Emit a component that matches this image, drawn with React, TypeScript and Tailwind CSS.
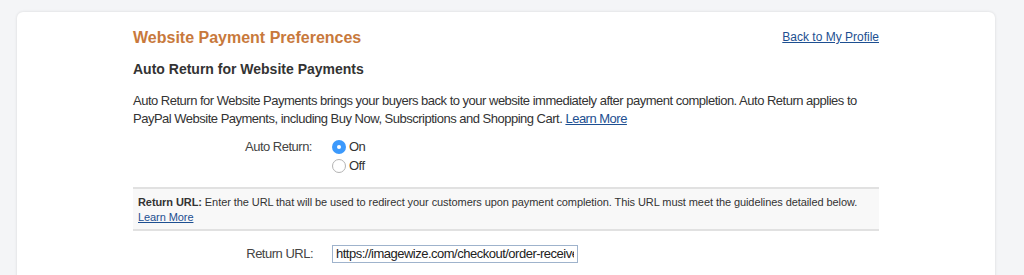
import React from 'react';

const FONT = { fontFamily: '"Liberation Sans", Arial, Helvetica, sans-serif' };

export default function App() {
  return (
    <div className="h-[275px] w-full overflow-hidden bg-[#f4f5f7] pl-[17px] pr-[29px] pt-[12px]" style={FONT}>
      <div className="h-[300px] rounded-t-[6px] bg-white shadow-[0_0_3px_rgba(0,0,0,0.12)]">
        <div className="ml-[116px] w-[746px] pt-[16px] text-[#333]">
          {/* Header */}
          <div className="flex items-start justify-between">
            <h1 className="text-[16px] font-bold leading-[20px] text-[#c8793c]">Website Payment Preferences</h1>
            <a href="#" className="mt-[1px] text-[12px] leading-[16px] text-[#1d4f91] underline">
              Back to My Profile
            </a>
          </div>

          <h2 className="mt-[12px] text-[14px] font-bold leading-[18px] text-[#333]">
            Auto Return for Website Payments
          </h2>

          <p className="mt-[14px] text-[13px] leading-[18px] tracking-[-0.5px] text-[#333]">
            Auto Return for Website Payments brings your buyers back to your website immediately after payment
            completion. Auto Return applies to PayPal Website Payments, including Buy Now, Subscriptions and Shopping
            Cart.{' '}
            <a href="#" className="text-[#1d4f91] underline">
              Learn More
            </a>
          </p>

          {/* Auto Return radios */}
          <div className="mt-[9px] flex text-[13px] leading-[19px] tracking-[-0.5px]">
            <div className="w-[180px] pr-[1px] text-right text-[#444]">Auto Return:</div>
            <div className="ml-[19px] flex flex-col">
              <label className="flex items-center gap-[3px]">
                <span className="flex h-[14px] w-[14px] items-center justify-center rounded-full bg-[#3b99fc]">
                  <span className="h-[4px] w-[4px] rounded-full bg-white" />
                </span>
                <span>On</span>
              </label>
              <label className="flex items-center gap-[3px]">
                <span className="h-[14px] w-[14px] rounded-full border border-[#b3b3b3] bg-white" />
                <span>Off</span>
              </label>
            </div>
          </div>

          {/* Return URL info box */}
          <div className="mt-[12px] border-y-2 border-[#e1e1e1] bg-[#f8f8f8] px-[5px] pb-[4px] pt-[6px] text-[11px] leading-[15px] tracking-[-0.08px] text-[#333]">
            <span className="font-bold">Return URL:</span> Enter the URL that will be used to redirect your customers
            upon payment completion. This URL must meet the guidelines detailed below.
            <br />
            <a href="#" className="text-[#1d4f91] underline">
              Learn More
            </a>
          </div>

          {/* Return URL input */}
          <div className="mt-[13px] flex items-center text-[13px] tracking-[-0.5px]">
            <div className="w-[180px] text-right text-[#444]">Return URL:</div>
            <input
              readOnly
              value="https://imagewize.com/checkout/order-received/"
              className="ml-[19px] h-[18px] w-[246px] border border-[#9fb3cc] px-[3px] text-[13px] tracking-[-0.5px] text-[#222] outline-none"
              style={FONT}
            />
          </div>
        </div>
      </div>
    </div>
  );
}
